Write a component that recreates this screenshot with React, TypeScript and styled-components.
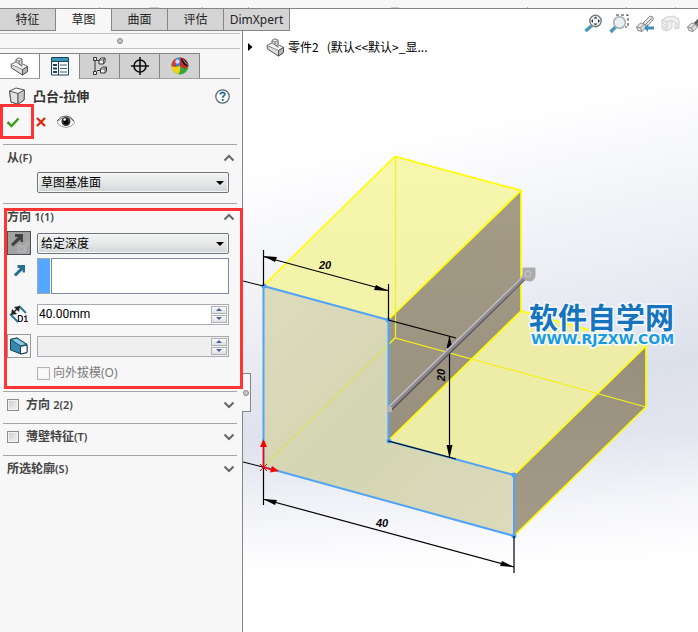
import React from "react";
import styled, { createGlobalStyle } from "styled-components";

const UI = '"Noto Sans", "Noto Sans CJK SC", sans-serif';

const Global = createGlobalStyle`
  * { box-sizing: border-box; }
  body { margin: 0; background: #fff; font: 13px/20px ${UI}; color: #111; }
  button, input, select { font: inherit; color: inherit; }
`;

const Page = styled.div`
  display: grid;
  grid-template-rows: 9px 1fr;
  min-height: 100vh;
  overflow: hidden;
`;

const Ribbon = styled.div`
  background: #f7f7f7;
  border-bottom: 1px solid #858585;
  overflow: hidden;
`;

const Workspace = styled.div`
  display: grid;
  grid-template-columns: 243px minmax(0, 1fr);
`;

const Side = styled.aside`
  position: relative;
  z-index: 2;
  display: flex;
  flex-direction: column;
  min-width: 0;
`;

const Tabs = styled.nav`
  display: flex;
  width: max-content;
  height: 22px;
`;

const Tab = styled.button<{ $active?: boolean; $wide?: boolean }>`
  width: ${(p) => (p.$wide ? 66 : 56)}px;
  padding: 0;
  border: solid #858585;
  border-width: ${(p) => (p.$active ? "0 1px 0 0" : "0 1px 1px 0")};
  background: ${(p) => (p.$active ? "#f7f7f7" : "#d4d4d4")};
  font-size: 12px;
  line-height: 20px;
  color: #222;
  white-space: nowrap;
`;

const Panel = styled.div`
  position: relative;
  flex: 1;
  background: #f7f7f7;
  border-right: 1px solid #858585;
`;

const Grip = styled.div`
  display: flex;
  align-items: center;
  justify-content: center;
  height: 16px;
  margin: 2px 2px 4px 0;
  border: solid #c2c2c2;
  border-width: 1px 0;
`;

const Dot = styled.span`
  width: 6px;
  height: 6px;
  border: 1px solid #858585;
  border-radius: 50%;
  background: #c8c8c8;
`;

const IconTabs = styled.div`
  display: flex;
  height: 26px;
  margin-right: 2px;
  border-bottom: 1px solid #a0a0a0;
`;

const IconTab = styled.button<{ $tone: "plain" | "active" | "grey" }>`
  display: grid;
  place-items: center;
  width: 40px;
  height: ${(p) => (p.$tone === "active" ? 26 : 25)}px;
  padding: 0;
  border: solid #858585;
  border-width: 1px 1px 0 0;
  background: ${(p) => ({ plain: "#ffffff", active: "#f7f7f7", grey: "#d2d2d2" })[p.$tone]};
`;

const TitleRow = styled.div`
  display: flex;
  align-items: center;
  gap: 7px;
  height: 24px;
  margin: 5px 0 -4px;
  padding: 0 12px 0 8px;
`;

const Title = styled.h1`
  flex: 1;
  margin: 0;
  font-size: 13px;
  font-weight: 700;
  line-height: 20px;
  color: #333;
`;

const IconButton = styled.button`
  display: grid;
  place-items: center;
  padding: 0;
  border: 0;
  background: none;
`;

const Actions = styled.div`
  display: flex;
  align-items: center;
  height: 35px;
`;

const Cancel = styled(IconButton)`
  margin: 0 10px 0 2px;
`;

const OkFrame = styled.div`
  display: flex;
  align-items: center;
  width: 34px;
  height: 35px;
  border: 3px solid #ff3434;
  padding-left: 3px;
`;

const Section = styled.section`
  margin: 0 5px 0 3px;
  border-top: 1px solid #a5a5a5;
  padding: 1px 0 6px;
`;

const FromSection = styled(Section)`
  margin-top: 5px;
  padding-bottom: 10px;
`;

const DirectionSection = styled(Section)`
  padding-bottom: 11px;
`;

const Header = styled.div`
  display: flex;
  align-items: center;
  justify-content: space-between;
  height: 24px;
  padding: 0 2px 0 4px;
`;

const Heading = styled.h2`
  margin: 0;
  font-size: 12px;
  font-weight: 600;
  line-height: 20px;
  color: #444;
`;

const HeadLabel = styled.label`
  display: flex;
  align-items: center;
  gap: 7px;
  font-size: 12px;
  font-weight: 600;
  line-height: 20px;
  color: #444;
`;

const Key = styled.span`
  font-size: 11px;
`;

const Check = styled.input`
  appearance: none;
  width: 13px;
  height: 13px;
  margin: 0;
  border: 1px solid #8d8d8d;
  background: linear-gradient(135deg, #c9cdd2, #f5f5f5);
  box-shadow: inset 0 0 0 1px #f2f2f2;

  &:disabled {
    border-color: #b4b4b4;
    background: #f9f9f9;
  }
`;

const HeadCheck = styled(Check)`
  width: 12px;
  height: 12px;
`;

const Field = styled.div`
  display: grid;
  grid-template-columns: 24px minmax(0, 1fr);
  gap: 6px;
  align-items: center;
  height: 24px;
  margin: 0 8px 8px 4px;
`;

const FirstField = styled(Field)`
  margin-top: 2px;
  margin-bottom: 3px;
`;

const PickField = styled(Field)`
  height: 36px;
  align-items: start;
`;

const SelectField = styled(Field)`
  height: 21px;
  margin-top: 2px;
  margin-bottom: 0;
`;

const SelectWrap = styled.span`
  position: relative;
  display: block;
  height: 21px;

  &::after {
    content: "";
    position: absolute;
    right: 5px;
    top: 9px;
    border: solid transparent;
    border-width: 4px 4px 0;
    border-top-color: #000;
    pointer-events: none;
  }
`;

const Select = styled.select`
  appearance: none;
  display: block;
  width: 100%;
  height: 21px;
  padding: 0 20px 0 3px;
  border: 1px solid #6f757a;
  border-radius: 2px;
  background: linear-gradient(#f1f2f2, #e6e8e8 50%, #d2d6d7);
  box-shadow: inset 0 0 0 1px #f7f7f7;
  font-size: 12px;
  line-height: 20px;
  color: #000;
`;

const Tool = styled.button<{ $pressed?: boolean }>`
  display: grid;
  place-items: center;
  width: 24px;
  height: 24px;
  padding: 0;
  border: 1px solid ${(p) => (p.$pressed ? "#4d5254" : "#9a9a9a")};
  background: ${(p) => (p.$pressed ? "#a2a2a2" : "#f7f7f7")};
`;

const Center = styled.span`
  display: grid;
  place-items: center;
  height: 24px;
`;

const Picker = styled.div`
  display: grid;
  grid-template-columns: 13px minmax(0, 1fr);
  gap: 1px;
  height: 36px;
`;

const Swatch = styled.span`
  border: 1px solid #a5a5a5;
  border-right: 0;
  background: #55a8ff;
`;

const PickInput = styled.input`
  width: 100%;
  height: 36px;
  border: 1px solid #808aa0;
  background: #fff;
`;

const SpinBox = styled.div<{ $off?: boolean }>`
  display: flex;
  height: 21px;
  border: 1px solid #a9abb0;
  background: ${(p) => (p.$off ? "#efefef" : "#fff")};
`;

const SpinInput = styled.input`
  flex: 1;
  min-width: 0;
  padding: 0 1px;
  border: 0;
  background: none;
  font: 12px/18px Roboto, sans-serif;
  color: #000;
`;

const Steps = styled.div`
  display: grid;
  grid-template-rows: 8px 8px;
  gap: 1px;
  width: 17px;
  margin: 1px 0;
`;

const Step = styled.button`
  display: grid;
  place-items: center;
  width: 16px;
  padding: 0;
  border: 1px solid #b0b2b6;
  background: linear-gradient(#fafafa, #dddfe2);
`;

const OptionRow = styled.label`
  display: flex;
  align-items: center;
  gap: 3px;
  height: 14px;
  margin-left: 34px;
  font-size: 12px;
  line-height: 14px;
  color: #7a7a7a;
`;

const Highlight = styled.div`
  position: absolute;
  left: 4px;
  right: -1px;
  top: 177px;
  height: 181px;
  border: 3px solid #ff3434;
  pointer-events: none;
`;

const Flyout = styled.div`
  position: absolute;
  right: -9px;
  top: 342px;
  display: flex;
  align-items: center;
  justify-content: center;
  width: 9px;
  height: 39px;
  border: 1px solid #858585;
  border-left: 0;
  background: #f7f7f7;
`;

const Viewport = styled.main`
  display: grid;
  position: relative;
  overflow: hidden;
  background:
    linear-gradient(180deg, rgba(255, 255, 255, 0) 68%, #fff 91%),
    linear-gradient(168deg, #fff 22%, #eceef4 46%, #dce0eb 62%, #e6e8f1 76%, #fff 96%);
`;

const Scene = styled.svg`
  display: block;
  grid-area: 1 / 1;
`;

const DimText = styled.text`
  font: italic 700 11px "Liberation Sans", sans-serif;
  text-anchor: middle;
`;

const Tree = styled.div`
  position: absolute;
  left: 5px;
  top: 28px;
  display: flex;
  align-items: center;
  height: 20px;
  font: 12px/20px "Noto Sans CJK SC", sans-serif;
  color: #000;
  white-space: pre;
`;

const TreeIcon = styled.span`
  display: flex;
  margin: 0 3px 0 13px;
`;

const HeadsUp = styled.div`
  position: absolute;
  left: 341px;
  top: 5px;
  display: flex;
  gap: 6px;
`;

const Brand = styled.a`
  position: absolute;
  left: 286px;
  top: 291px;
  text-decoration: none;
  white-space: nowrap;
  paint-order: stroke fill;
  -webkit-text-stroke: 3px #f4f9fd;
`;

const BrandName = styled.span`
  display: block;
  font: 700 29px/32px "Noto Sans CJK SC", sans-serif;
  color: #1673bd;
`;

const BrandUrl = styled.span`
  display: block;
  padding-left: 2px;
  font: 700 14px/14px "DejaVu Sans", sans-serif;
  color: #1b9ae0;
`;

function PartIcon() {
  return (
    <svg width="19" height="19" viewBox="0 0 19 19" stroke="#555" strokeLinejoin="round" aria-hidden>
      <path d="M1 7.500 6 5V2.500L9 1l3 1.200v5L15 8l2.500 1.500v5L12.500 18 1.500 11Z" fill="#dedede" />
      <path d="M6 2.500 9 4l3-1.800L9 1ZM1 7.500l5-2.500 3 2 3 1.500 1-1.300 4.500 2.300-5 3Z" fill="#f7f7f7" stroke="#888" />
      <path d="M12.500 12.500V18l5-3.500v-5Z" fill="#b8b8b8" />
      <path d="M9 4v3l3.500 2.500" fill="none" stroke="#666" />
    </svg>
  );
}

function PropertyIcon() {
  return (
    <svg width="18" height="19" viewBox="0 0 18 19" aria-hidden>
      <path d="M.5.500h17v17.500H.5Z" fill="#fff" stroke="#17445a" />
      <path d="M1 1h16v3H1Z" fill="#3d93b5" />
      <path d="M0 4.500h18M7.500 5v13" stroke="#17445a" />
      <path d="M2 7h4v2H2zM2 10.500h4v2H2zM2 14h4v2H2z" fill="#17445a" />
      <path d="M9 8h7M9 11.500h7M9 15h7" stroke="#356174" />
    </svg>
  );
}

function ConfigIcon() {
  return (
    <svg width="16" height="19" viewBox="0 0 16 19" fill="#eee" stroke="#333" aria-hidden>
      <path d="M1.500.500h3v3h-3zM1.500 14.500h3v3h-3z" />
      <path d="M3 3.500v11M5 3.500h3M5 13.500h4" fill="none" />
      <path d="m7 3 2-2h4v4l-1.500 2H7ZM8.500 12l2-2h4v4L13 16H8.500Z" />
      <path d="M7 3h4.500v4M11.500 3 13 1M8.500 12H13v4M13 12l1.500-2" fill="none" strokeWidth=".8" />
    </svg>
  );
}

function TargetIcon() {
  return (
    <svg width="18" height="18" viewBox="0 0 18 18" fill="none" stroke="#111" strokeWidth="1.600" aria-hidden>
      <circle cx="9" cy="9" r="6" />
      <path d="M9 0v18M0 9h18" />
    </svg>
  );
}

function BallIcon() {
  return (
    <svg width="18" height="18" viewBox="0 0 18 18" aria-hidden>
      <circle cx="9" cy="9" r="8.500" fill="#36a642" />
      <path d="M9 9 .5 9A8.500 8.500 0 0 1 9 .5Z" fill="#3c7fd6" />
      <path d="M9 9V.5A8.500 8.500 0 0 1 17.500 9L14 12Z" fill="#cf2929" />
      <path d="M.5 9Q5 10.500 9 9q1 5-2 8.300A8.500 8.500 0 0 1 .5 9Z" fill="#f0cf1d" />
      <path d="M.5 9A8.500 8.500 0 0 1 5 1.500Q4 6 5 10Z" fill="#d93a24" />
      <path d="M10 1.500q6.500 1 6.800 8Q11 8 10 1.500Z" fill="#111" />
      <path d="m12 2.500 4 5" stroke="#bbb" />
      <circle cx="6.500" cy="4.500" r="2.200" fill="#fff" opacity=".7" />
    </svg>
  );
}

function BlockIcon() {
  return (
    <svg width="18" height="18" viewBox="0 0 18 18" stroke="#555" strokeLinejoin="round" aria-hidden>
      <path d="M1.500 4 8 1l8.500 2-.5 10-6 4.200-7-2.200Z" fill="#f7f7f7" />
      <path d="m1.500 4 1.500 11 7 2.200V6.500Z" fill="#e2e2e2" />
      <path d="m10 6.500 6.500-3.500-.5 10-6 4.200Z" fill="#c9c9c9" />
    </svg>
  );
}

function HelpIcon() {
  return (
    <svg width="15" height="15" viewBox="0 0 15 15" fill="none" aria-hidden>
      <circle cx="7.500" cy="7.500" r="6.700" fill="#fff" stroke="#53636d" strokeWidth="1.200" />
      <path d="M5.300 5.500q0-2 2.300-2t2.200 1.800q0 1.100-1.200 1.700Q7.700 7.600 7.700 8.700M7.700 10v2" stroke="#2a7193" strokeWidth="1.800" />
    </svg>
  );
}

function EyeIcon() {
  return (
    <svg width="20" height="14" viewBox="0 0 20 14" aria-hidden>
      <path d="M1 7.500Q5 2.500 10 2.500t9 5Q15 12.500 10 12.500T1 7.500Z" fill="#fff" stroke="#999" />
      <path d="M1 6Q5 1 10 1t8 5" fill="none" stroke="#555" />
      <circle cx="10" cy="6.500" r="4.500" fill="#333" />
      <circle cx="10" cy="7" r="2.400" fill="#000" />
      <circle cx="8.700" cy="4.500" r="1.200" fill="#fff" />
    </svg>
  );
}

function Chevron({ up }: { up?: boolean }) {
  return (
    <svg width="12" height="8" viewBox="0 0 12 8" fill="none" stroke="#666" strokeWidth="2" aria-hidden>
      <path d={up ? "m1.500 6.500 4.500-4.500 4.500 4.500" : "m1.500 1.500 4.500 4.500 4.500-4.500"} />
    </svg>
  );
}

function ReverseIcon() {
  return (
    <svg width="22" height="22" viewBox="0 0 22 22" aria-hidden>
      <path d="m3 12 7-7H7V2h8v8h-2.500V7.500L5 14.500Z" fill="#424242" />
      <path d="m19.500 10-6.500 6.500v-3H10V20h8v-2.500h-2.500l5.500-6Z" fill="#a6a6a6" stroke="#c2c2c2" strokeWidth=".8" />
    </svg>
  );
}

function ArrowIcon() {
  return (
    <svg width="13" height="13" viewBox="0 0 13 13" aria-hidden>
      <path d="M4.500 1H12v7.500H9.500V6L3 12.500.8 10.500 7.200 4H4.500Z" fill="#27708f" />
    </svg>
  );
}

function DepthIcon() {
  return (
    <svg width="20" height="19" viewBox="0 0 20 19" fill="none" aria-hidden>
      <path d="m1 9 8 8M10 1l7 7" stroke="#2b7291" strokeWidth="1.800" />
      <path d="m2 10 1-6 2 2 2-2-2-2 6-1-1 6-2-2-2 2 2 2Z" fill="#222" />
      <path d="M9.500 10.500v6h2q2-.2 2-3t-2-3ZM15 12l2-1v5.500M15 16.500h4" stroke="#222" strokeWidth="1.200" />
    </svg>
  );
}

function DraftIcon() {
  return (
    <svg width="20" height="18" viewBox="0 0 20 18" stroke="#164357" strokeLinejoin="round" aria-hidden>
      <path d="M1.500 2.500 8 1l10 6.500v8l-6 1.500-10.500-4Z" fill="#3989ad" />
      <path d="M1.500 2.500 8 1l10 6.500-6.500 1.500Z" fill="#86c7e2" />
      <path d="m11.500 9.500 6.500-1.500v7.500l-6.500 1.500Z" fill="#fff" />
    </svg>
  );
}

function ZoomFitIcon() {
  return (
    <svg width="19" height="20" viewBox="0 0 19 20" aria-hidden>
      <path d="m1.500 17 6-5" stroke="#4d96b9" strokeWidth="3.500" />
      <circle cx="11.500" cy="7" r="5.700" fill="#f1f5f6" stroke="#737e84" strokeWidth="1.500" />
      <path d="m11.500 2.500 2 2h-4zM11.500 11.500l2-2h-4zM7 7l2-2v4zM16 7l-2-2v4z" fill="#333" />
    </svg>
  );
}

function ZoomAreaIcon() {
  return (
    <svg width="20" height="20" viewBox="0 0 20 20" aria-hidden>
      <path d="M7 1h12v12h-3" fill="none" stroke="#333" strokeDasharray="3 2" />
      <path d="m1.500 18 5-5" stroke="#4d96b9" strokeWidth="3.500" />
      <circle cx="10.500" cy="8.500" r="5.800" fill="#e8f0f1" stroke="#a3aeb2" strokeWidth="1.500" />
    </svg>
  );
}

function PreviousIcon({ dark }: { dark?: boolean }) {
  return (
    <svg width="20" height="20" viewBox="0 0 20 20" stroke="#8a8a8a" strokeLinejoin="round" aria-hidden>
      <path d="m1.500 13 4-4 3 1 3 3-4.500 4.500-4-1Z" fill="#e2e2e2" />
      <path d="m8 9 7-7 3 1v3l-6 6.500Z" fill={dark ? "#5c5c5c" : "#e6e6e6"} />
      <path d="m1.500 13 4 1 1.500 3.500M5.500 14l4-4M10 11l7-7" fill="none" />
      {!dark && <path d="m9 14 4-4v2.500h6v3h-6V18Z" fill="#3f8fb5" stroke="none" />}
    </svg>
  );
}

function SectionIcon() {
  return (
    <svg width="19" height="18" viewBox="0 0 19 18" fill="#f0f0f0" stroke="#cfcfcf" aria-hidden>
      <path d="m1 5 5-3 6-1 6 3v9l-4 1V7l-3-1v7l-5 3-5-2Z" />
      <path d="m1 5 5 2 5-2M6 7v9" fill="none" />
      <path d="m2 8 3 3M2 11l3 3M15 8l2 2M15 11l2 2" />
    </svg>
  );
}

function RibbonMarks() {
  return (
    <svg width="698" height="8" fill="none" stroke="#b8b8b8" aria-hidden>
      <path d="M99.500 0v6M248.500 0v6M527.500 0v6M626.500 0v6M675.500 0v6" />
      <path d="M149 .5h10M202 0v2M391 .5h8" strokeWidth="2" stroke="#cfcfcf" />
    </svg>
  );
}

function Model() {
  return (
    <Scene width="455" height="623" viewBox="243 9 455 623" role="img" aria-label="L 形零件拉伸预览">
      <defs>
        <linearGradient id="front" x1="0" y1="0" x2="1" y2="1">
          <stop stopColor="#dcdcbd" />
          <stop offset=".5" stopColor="#d4d5b2" />
          <stop offset="1" stopColor="#dbdbbc" />
        </linearGradient>
        <linearGradient id="top" x1="0" y1="0" x2="0" y2="1">
          <stop stopColor="#f6f6ad" />
          <stop offset="1" stopColor="#f3f2a9" />
        </linearGradient>
        <linearGradient id="wall" x1="0" y1="0" x2="0" y2="1">
          <stop stopColor="#a59c87" />
          <stop offset="1" stopColor="#988f7d" />
        </linearGradient>
        <linearGradient id="end" x1="0" y1="0" x2="0" y2="1">
          <stop stopColor="#978e7d" />
          <stop offset="1" stopColor="#a49b87" />
        </linearGradient>
      </defs>
      <path d="M263 286 395 156 521 190 388 320Z" fill="url(#top)" />
      <path d="M388 320 521 190V311L388 441Z" fill="url(#wall)" />
      <path d="M388 441 521 311 646 346 514 475Z" fill="#ededa7" />
      <path d="M514 475 646 346V407L514 536Z" fill="url(#end)" />
      <path d="M263 286 388 320V441L514 475V536L263 467Z" fill="url(#front)" />
      <g fill="none" stroke="#ffff00" strokeWidth="1.200">
        <path d="M263 286 395 156.500 521 190.500 388 320M521 190V311L388 441M521 311 646 346 514 475M646 346V407L514 536" strokeWidth="1.700" />
        <path d="M395.500 156V338L646 407" stroke="#f4f11c" />
        <path d="M263 467 388 345" stroke="#dfdc61" />
        <path d="m388 345 7-7" />
      </g>
      <path d="M263.500 286 388.500 320V441L514 475V536L263.500 467Z" fill="none" stroke="#50a3f6" strokeWidth="2" />
      <g fill="#50a3f6">
        <circle cx="264" cy="286" r="2.500" />
        <circle cx="388" cy="320" r="2.500" />
        <circle cx="389" cy="441" r="2.500" />
        <circle cx="514" cy="475" r="2.500" />
        <circle cx="514" cy="536" r="2.500" />
      </g>
      <path
        d="M263.500 250V286M388.500 284V320L456 338M243 281 263 286M263 256.500 388 290.500M449.500 336V458M388 441 456 459M243 462 263 467M263.500 467V505M514 536V573M263 499 514 567"
        stroke="#000"
        strokeWidth="1.200"
        fill="none"
      />
      <g fill="#000">
        <path d="m263 256 14 1-2 5ZM388 291l-14-1 2-5ZM449.500 336l3 12h-6ZM449.500 458l3-13h-6ZM263 499l14 1-2 5ZM514 567l-14-1 2-5Z" />
        <DimText x="325" y="269">20</DimText>
        <DimText x="382" y="527">40</DimText>
        <DimText transform="translate(445 375) rotate(-90)">20</DimText>
      </g>
      <path d="M389.500 409.500 527 275" stroke="#57525a" strokeWidth="5" />
      <path d="m389 408.500 138-134" stroke="#8e898e" strokeWidth="4" />
      <path d="m388 407.500 138-134" stroke="#c3c0c3" strokeWidth="1.500" />
      <path d="M387 407h5v5h-5z" fill="#b4b4b4" />
      <path d="M523 268h12v8q-1 5-5 5-6 0-7-5Z" fill="#ababab" stroke="#ababab" strokeLinejoin="round" />
      <circle cx="528" cy="274" r="3" fill="none" stroke="#c8c8c8" />
      <g stroke="#f00" fill="#f00">
        <path d="M263.500 467V445M263 467l10 3" strokeWidth="1.500" />
        <path d="m263.500 439 3.500 8h-7ZM279 471l-9 1.500 2-6.500Z" stroke="none" />
        <path d="m260 464 7 7m0-7-7 7" fill="none" />
      </g>
    </Scene>
  );
}

function Spin({ label, value, off }: { label: string; value: string; off?: boolean }) {
  return (
    <SpinBox $off={off}>
      <SpinInput aria-label={label} defaultValue={value} disabled={off} />
      <Steps>
        <Step aria-label="增加" disabled={off}>
          <svg width="6" height="3"><path d="M0 3 3 0l3 3Z" fill="#4c5f9c" /></svg>
        </Step>
        <Step aria-label="减少" disabled={off}>
          <svg width="6" height="3"><path d="m0 0 3 3 3-3Z" fill="#4c5f9c" /></svg>
        </Step>
      </Steps>
    </SpinBox>
  );
}

function Toggle({ up }: { up?: boolean }) {
  return (
    <IconButton aria-label={up ? "折叠" : "展开"}>
      <Chevron up={up} />
    </IconButton>
  );
}

export default function App() {
  return (
    <Page>
      <Global />
      <Ribbon><RibbonMarks /></Ribbon>
      <Workspace>
        <Side>
          <Tabs>
            <Tab>特征</Tab>
            <Tab $active>草图</Tab>
            <Tab>曲面</Tab>
            <Tab>评估</Tab>
            <Tab $wide>DimXpert</Tab>
          </Tabs>
          <Panel>
            <Grip><Dot /></Grip>
            <IconTabs>
              <IconTab $tone="plain" aria-label="设计树"><PartIcon /></IconTab>
              <IconTab $tone="active" aria-label="属性"><PropertyIcon /></IconTab>
              <IconTab $tone="grey" aria-label="配置"><ConfigIcon /></IconTab>
              <IconTab $tone="grey" aria-label="尺寸专家"><TargetIcon /></IconTab>
              <IconTab $tone="grey" aria-label="外观"><BallIcon /></IconTab>
            </IconTabs>
            <TitleRow>
              <BlockIcon />
              <Title>凸台-拉伸</Title>
              <IconButton aria-label="帮助"><HelpIcon /></IconButton>
            </TitleRow>
            <Actions>
              <OkFrame>
                <IconButton aria-label="确定">
                  <svg width="14" height="12" viewBox="0 0 14 12" fill="none" stroke="#3f9e22" strokeWidth="2.500">
                    <path d="m1.500 6 4 4 7-7.500" />
                  </svg>
                </IconButton>
              </OkFrame>
              <Cancel aria-label="取消">
                <svg width="10" height="10" viewBox="0 0 10 10" stroke="#d92a0c" strokeWidth="2.300">
                  <path d="m1 1 8 8m0-8L1 9" />
                </svg>
              </Cancel>
              <IconButton aria-label="预览"><EyeIcon /></IconButton>
            </Actions>
            <FromSection>
              <Header>
                <Heading>从<Key>(F)</Key></Heading>
                <Toggle up />
              </Header>
              <SelectField>
                <span />
                <SelectWrap>
                  <Select aria-label="从"><option>草图基准面</option></Select>
                </SelectWrap>
              </SelectField>
            </FromSection>
            <DirectionSection>
              <Header>
                <Heading>方向 <Key>1(1)</Key></Heading>
                <Toggle up />
              </Header>
              <FirstField>
                <Tool $pressed aria-label="反向"><ReverseIcon /></Tool>
                <SelectWrap>
                  <Select aria-label="终止条件"><option>给定深度</option></Select>
                </SelectWrap>
              </FirstField>
              <PickField>
                <Center><ArrowIcon /></Center>
                <Picker>
                  <Swatch />
                  <PickInput aria-label="拉伸方向" />
                </Picker>
              </PickField>
              <Field>
                <Center><DepthIcon /></Center>
                <Spin label="深度" value="40.00mm" />
              </Field>
              <Field>
                <Tool aria-label="拔模"><DraftIcon /></Tool>
                <Spin label="拔模角度" value="" off />
              </Field>
              <OptionRow>
                <Check type="checkbox" disabled />向外拔模(O)
              </OptionRow>
            </DirectionSection>
            <Section>
              <Header>
                <HeadLabel><HeadCheck type="checkbox" /><span>方向 <Key>2(2)</Key></span></HeadLabel>
                <Toggle />
              </Header>
            </Section>
            <Section>
              <Header>
                <HeadLabel><HeadCheck type="checkbox" /><span>薄壁特征<Key>(T)</Key></span></HeadLabel>
                <Toggle />
              </Header>
            </Section>
            <Section>
              <Header>
                <Heading>所选轮廓<Key>(S)</Key></Heading>
                <Toggle />
              </Header>
            </Section>
            <Flyout><Dot /></Flyout>
            <Highlight />
          </Panel>
        </Side>
        <Viewport>
          <Model />
          <Tree>
            <svg width="5" height="8" aria-hidden><path d="M0 0 4.500 4 0 8Z" /></svg>
            <TreeIcon><PartIcon /></TreeIcon>
            <span>{"零件2   (默认<<默认>_显..."}</span>
          </Tree>
          <HeadsUp>
            <IconButton aria-label="整屏显示全图"><ZoomFitIcon /></IconButton>
            <IconButton aria-label="局部放大"><ZoomAreaIcon /></IconButton>
            <IconButton aria-label="上一视图"><PreviousIcon /></IconButton>
            <IconButton aria-label="剖面视图"><SectionIcon /></IconButton>
            <IconButton aria-label="视图定向"><PreviousIcon dark /></IconButton>
          </HeadsUp>
          <Brand href="#">
            <BrandName>软件自学网</BrandName>
            <BrandUrl>WWW.RJZXW.COM</BrandUrl>
          </Brand>
        </Viewport>
      </Workspace>
    </Page>
  );
}
